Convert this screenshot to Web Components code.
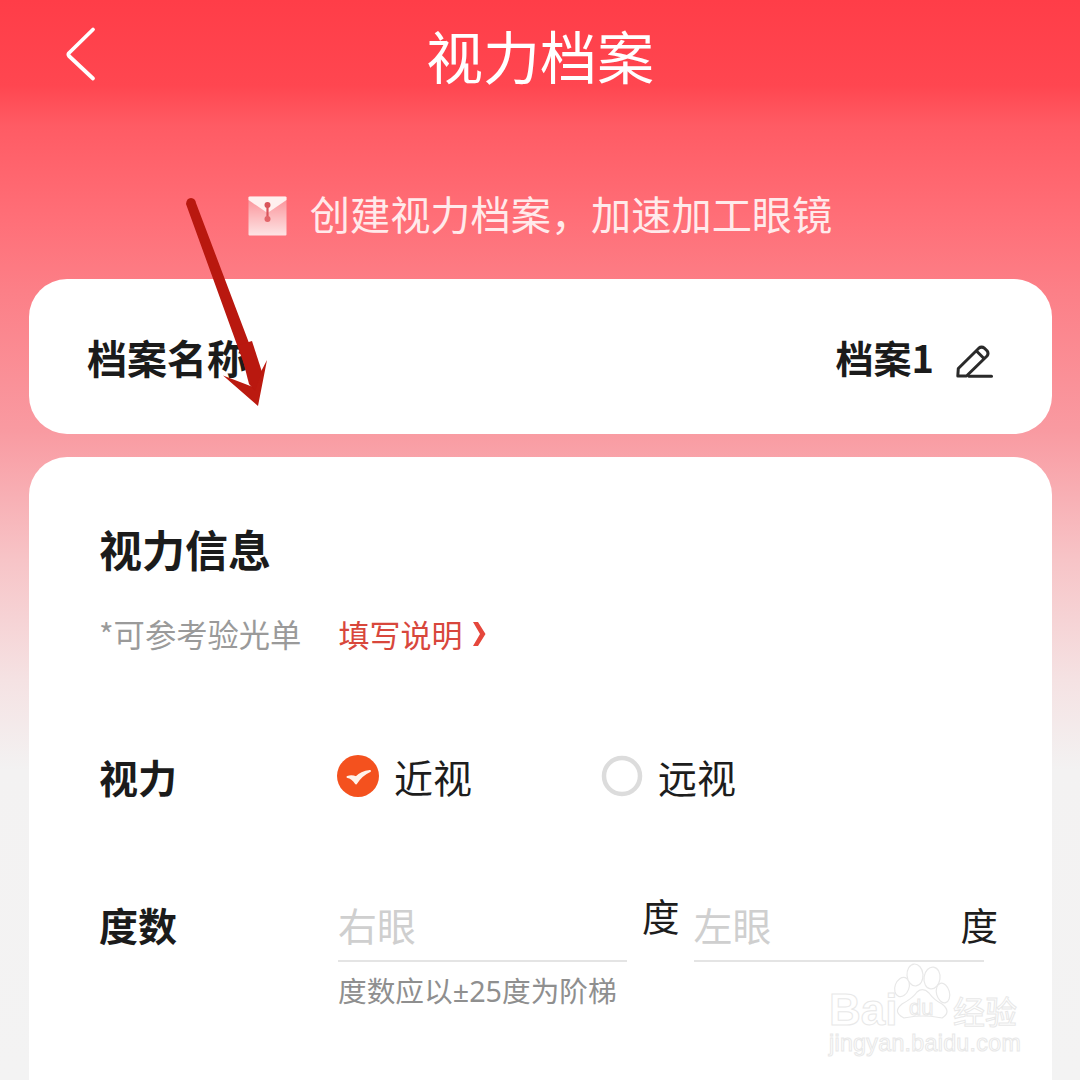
<!DOCTYPE html>
<html lang="zh"><head><meta charset="utf-8">
<style>
html,body{margin:0;padding:0}
body{width:1080px;height:1080px;overflow:hidden;font-family:"Noto Sans CJK SC","Noto Sans",sans-serif;background:#f3f3f3}
</style></head><body>
<vision-app>
  <app-header title="视力档案"></app-header>
  <notice-bar>创建视力档案，加速加工眼镜</notice-bar>
  <name-card label="档案名称" value="档案1"></name-card>
  <vision-card></vision-card>
</vision-app>
<script>
function def(name,html){
  customElements.define(name,class extends HTMLElement{
    connectedCallback(){
      if(this.shadowRoot)return;
      const s=this.attachShadow({mode:'open'});
      s.innerHTML=typeof html==='function'?html(this):html;
    }
  });
}
def('vision-app',`<style>
:host{display:block;position:relative;width:1080px;height:1080px;overflow:hidden;
background:linear-gradient(180deg,#ff3d48 0,#ff4650 85px,#ff5b64 125px,#ff6f78 220px,#fc7f87 290px,#f99aa1 430px,#f7c4c7 560px,#f5e2e3 680px,#f3f2f2 770px,#f3f3f3 100%)}
.page{display:flex;flex-direction:column}
</style><div class="page"><slot></slot></div><annotation-arrow></annotation-arrow><baidu-mark></baidu-mark>`);
def('app-header',h=>`<style>
:host{display:flex;height:112px;align-items:center;justify-content:center;position:relative}
svg{position:absolute;left:64px;top:26px}
h1{margin:-4px 0 0;font-size:57px;font-weight:400;color:#fff;line-height:112px;position:relative}
</style><svg width="34" height="56" viewBox="0 0 34 56"><path d="M29 3.500 L5 27 Q3.800 28.500 5 30 L29 52.500" fill="none" stroke="#fff" stroke-width="3.800" stroke-linecap="round" stroke-linejoin="round"/></svg><h1>${h.getAttribute('title')}</h1>`);
def('notice-bar',`<style>
:host{display:flex;align-items:center;justify-content:center;height:76px;margin-top:66px;margin-bottom:25px;gap:23px;color:#ffeaeb;font-size:40.200px;line-height:76px}
svg{display:block;flex:none}
span{display:block;margin-bottom:6px}
</style><svg width="39" height="40" viewBox="0 0 39 40"><defs><linearGradient id="e" x1="0" y1="0" x2="0" y2="1"><stop offset="0" stop-color="#fb8f96"/><stop offset="1" stop-color="#fde4e4"/></linearGradient></defs><rect width="38" height="39" x="0.500" y="0.500" rx="1" fill="url(#e)"/><path d="M0.500 1.500 Q0.500 0.500 2 0.500 H37 Q38.500 0.500 38.500 1.500 V4 L19.500 17 L0.500 4 Z" fill="#fff0ef"/><path d="M19.500 8 V22" stroke="#d9545b" stroke-width="2.200"/><circle cx="19.500" cy="9" r="3" fill="#d9545b"/><circle cx="19.500" cy="23" r="3" fill="#e2656a"/></svg><span><slot></slot></span>`);
def('name-card',h=>`<style>
:host{display:flex;align-items:center;justify-content:space-between;box-sizing:border-box;width:1023px;height:155px;margin-left:29px;padding:0 58px 0 58px;background:#fff;border-radius:38px;color:#1b1b1b;font-size:40px;font-weight:700}
.r{display:flex;align-items:center;gap:22px}
span{display:block;line-height:50px}
svg{display:block;margin-top:10px}
</style><span>${h.getAttribute('label')}</span><div class="r"><span style="font-size:38px">${h.getAttribute('value')}</span><svg width="38" height="34" viewBox="0 0 38 34"><path d="M1.800 31 L2.300 23.500 L22.800 3.200 Q25.500 1 28.500 3.200 L31 5.700 Q33 8.500 31 11 L10.500 31 Z M20.500 6 L28.500 14" fill="none" stroke="#2a2a2a" stroke-width="3" stroke-linejoin="round"/><path d="M13 31.300 H35.500" stroke="#2a2a2a" stroke-width="3" stroke-linecap="round"/></svg></div>`);
def('radio-opt',h=>{const on=h.hasAttribute('checked');return `<style>
:host{display:flex;align-items:center;gap:15px;font-size:39px;color:#1d1d1d;line-height:56px}
svg{display:block;flex:none}
</style>${on?`<svg width="42" height="42" viewBox="0 0 42 42"><circle cx="21" cy="21" r="21" fill="#f4511e"/><path d="M10.500 22 Q15 22.500 19 28.500 Q24 20 33 16 Q24 17 19 22.500 Q15 20.500 10.500 22 Z" fill="#fff3ea" stroke="#fff3ea" stroke-width="2" stroke-linejoin="round"/></svg>`:`<svg width="42" height="42" viewBox="0 0 42 42"><circle cx="21" cy="21" r="18" fill="#fff" stroke="#dcdcdc" stroke-width="4.500"/></svg>`}<span><slot></slot></span>`});
def('eye-input',h=>`<style>
:host{display:block;width:${h.getAttribute('w')}px;box-sizing:border-box;border-bottom:2px solid #e4e4e4;height:66px;color:#cfcfcf;font-size:39px;line-height:56px}
</style><slot></slot>`);
def('vision-card',`<style>
:host{display:block;box-sizing:border-box;width:1023px;height:700px;margin:23px 0 0 29px;padding:59px 0 0 70px;background:#fff;border-radius:38px;color:#1b1b1b}
h2{margin:0;font-size:43px;font-weight:700;line-height:64px}
.hint{display:flex;align-items:center;margin-top:29px;font-size:31.300px;line-height:50px;color:#9a9a9a;height:50px}
.hint .lnk{color:#d8473c;margin-left:37px;font-size:31px;display:flex;align-items:center;gap:9px}
.row{display:grid;grid-template-columns:238px auto;align-items:center}
.lab{font-size:39px;font-weight:700;line-height:56px}
.radios{display:flex}
.radios radio-opt:first-child{width:264px}
.r1{margin-top:89px}
.r2{margin-top:92px;align-items:start}
.eyes{display:flex;align-items:flex-start;margin-left:1px}
.unit{font-size:37.500px;line-height:56px;color:#1d1d1d}
.tip{margin:0 0 0 239px;font-family:"Noto Sans","Noto Sans CJK SC",sans-serif;font-size:28.700px;line-height:40px;color:#8f8f8f;padding-top:9px}
</style>
<h2>视力信息</h2>
<div class="hint"><span>*可参考验光单</span><span class="lnk">填写说明<svg width="16" height="28" viewBox="0 0 16 28"><path d="M2 2 H7 L14.500 14 L7 26 H2 L9 14 Z" fill="#e5473c"/></svg></span></div>
<div class="row r1"><div class="lab">视力</div><div class="radios"><radio-opt checked>近视</radio-opt><radio-opt>远视</radio-opt></div></div>
<div class="row r2"><div class="lab">度数</div><div class="eyes">
<eye-input w="289">右眼</eye-input><span class="unit" style="margin:-9px 14px 0 15px">度</span>
<eye-input w="290">左眼</eye-input><span class="unit" style="margin-left:-23px;position:relative">度</span>
</div></div>
<p class="tip">度数应以±25度为阶梯</p>`);
def('annotation-arrow',`<style>
:host{position:absolute;left:0;top:0;width:1080px;height:1080px;pointer-events:none;display:block}
svg{display:block}
</style><svg width="1080" height="1080"><path d="M186 204 Q186.500 198 191 198 Q195.500 198.500 196 203 L260 372 L249 378 Z" fill="#b9180f"/><path d="M258 406 L223 375.500 L253 387 L267 360 Z" fill="#bb1a10"/><path d="M239 345 L252 341 L262 372 L255 391 L249 384 Z" fill="#b9180f"/></svg>`);
def('baidu-mark',`<style>
:host{position:absolute;left:826px;top:960px;width:210px;height:100px;display:block;pointer-events:none;font-family:"Liberation Sans",sans-serif;color:#fff;-webkit-text-stroke:1px #e8e8e8}
span{position:absolute;white-space:nowrap;line-height:1}
svg{position:absolute;left:0;top:0}
</style>
<svg width="210" height="60" viewBox="0 0 210 60" fill="#fff" stroke="#e8e8e8" stroke-width="1.200"><ellipse cx="76" cy="27" rx="7" ry="10" transform="rotate(20 76 27)"/><ellipse cx="89" cy="15" rx="8" ry="11" transform="rotate(-5 89 15)"/><ellipse cx="106" cy="18" rx="8" ry="11" transform="rotate(8 106 18)"/><ellipse cx="117" cy="33" rx="6.500" ry="10" transform="rotate(-15 117 33)"/><path d="M78 58 Q66 52 76 44 Q87 38 91 32 Q97 27 103 33 Q108 40 116 44 Q126 52 116 58 Q97 54 78 58 Z"/></svg>
<span style="left:3px;top:28px;font-size:44px;font-weight:700">Bai</span>
<span style="left:83px;top:37px;font-size:22px">du</span>
<span style="left:127px;top:34px;font-size:32px;font-family:'Noto Sans CJK SC',sans-serif">经验</span>
<span style="left:3px;top:72px;font-size:23.200px;letter-spacing:0.300px">jingyan.baidu.com</span>`);
</script>
</body></html>
